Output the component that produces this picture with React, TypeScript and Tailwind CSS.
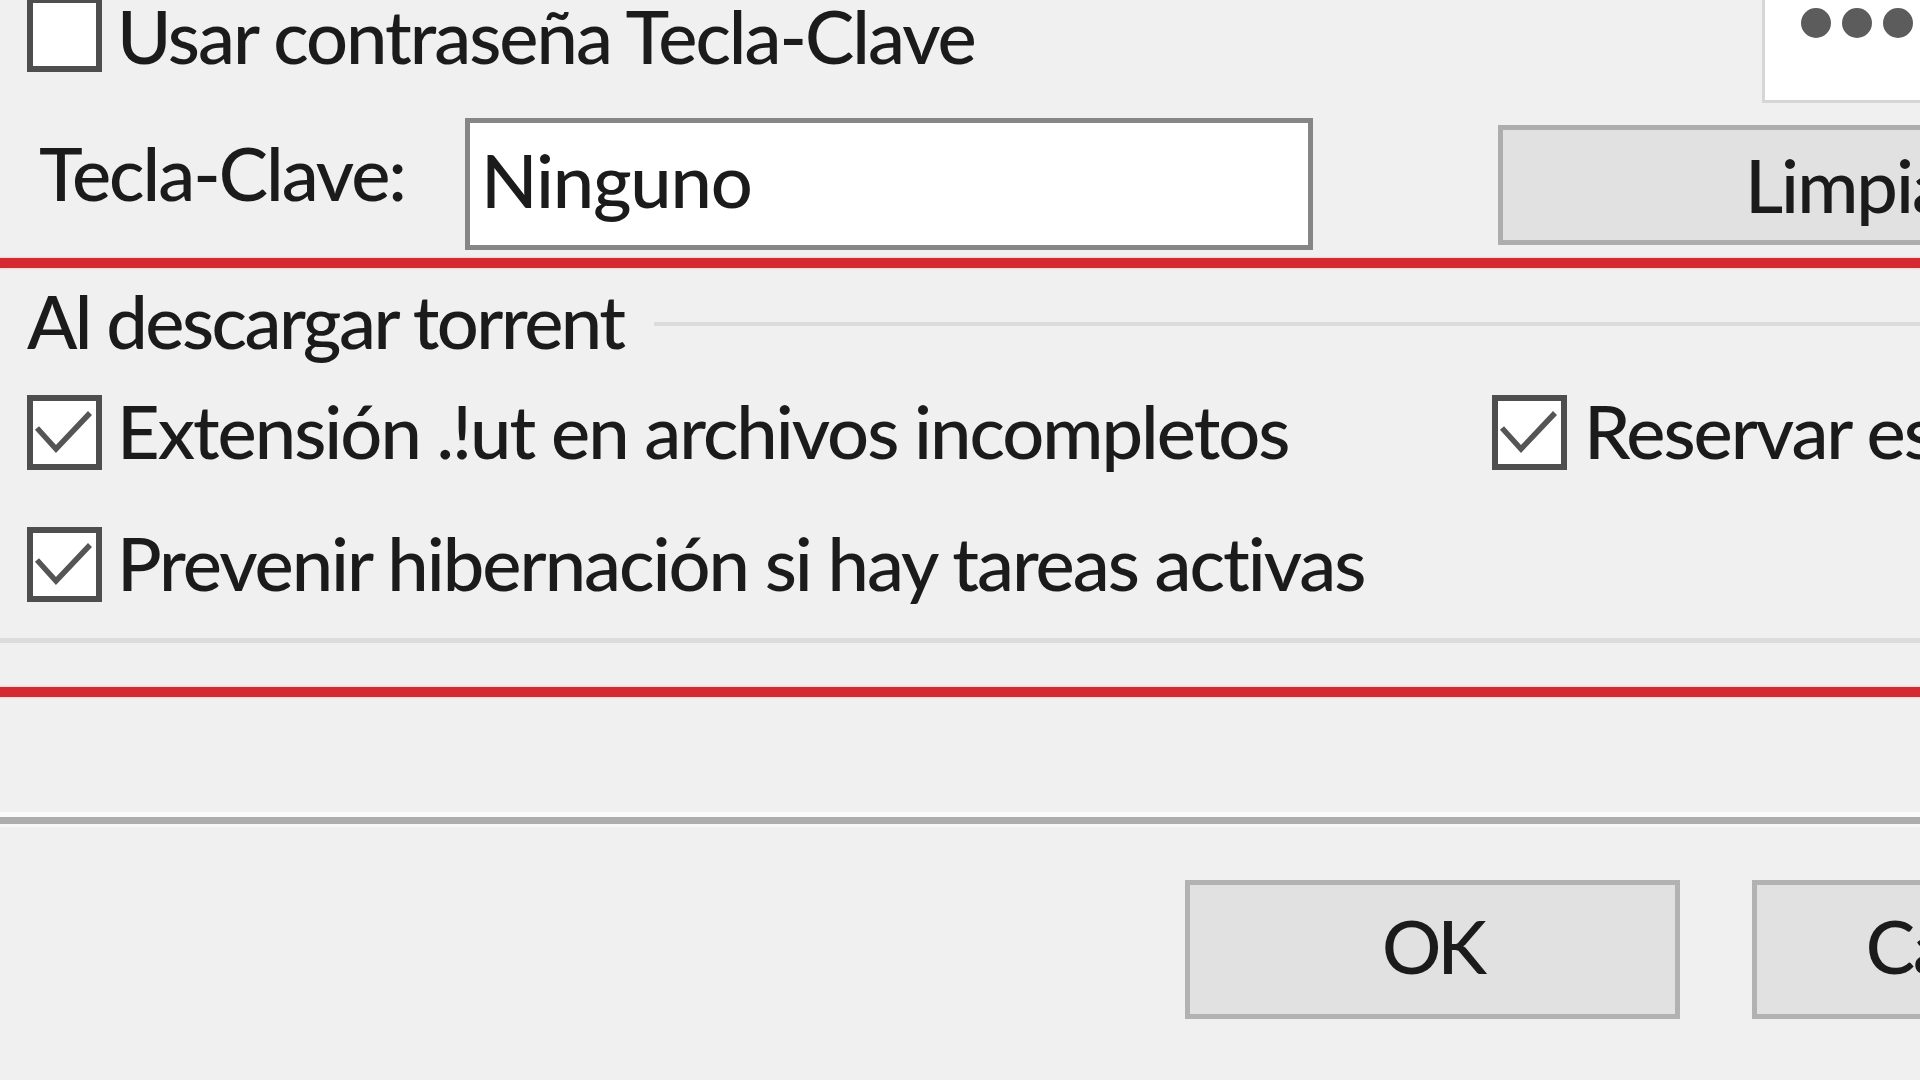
import React from "react";

function CheckBox({ checked = false }: { checked?: boolean }) {
  return (
    <div className="relative h-[75px] w-[75px] shrink-0 border-[6px] border-[#4e4e4e] bg-white">
      {checked && (
        <svg
          viewBox="0 0 75 75"
          className="absolute left-[-6px] top-[-6px] h-[75px] w-[75px]"
        >
          <polyline
            points="10,33 29,54 63,18"
            fill="none"
            stroke="#555555"
            strokeWidth="5.5"
          />
        </svg>
      )}
    </div>
  );
}

function Label({
  children,
  className = "",
  tight = "tracking-[-2px]",
}: {
  children: React.ReactNode;
  className?: string;
  tight?: string;
}) {
  return (
    <span className={`whitespace-nowrap leading-[75px] ${tight} ${className}`}>
      {children}
    </span>
  );
}

export default function App() {
  return (
    <div className="flex h-[1080px] w-[1920px] flex-col overflow-hidden bg-[#f0f0f0] font-['Lato','Open_Sans',sans-serif] text-[74px] font-medium text-[#1b1b1b]">
      {/* password row */}
      <div className="flex h-[104px] items-start">
        <div className="ml-[27px] -mt-[3px]">
          <CheckBox />
        </div>
        <Label className="ml-[15px] -mt-[2px]">Usar contraseña Tecla-Clave</Label>
        <div className="ml-auto -mt-[4px] flex h-[107px] w-[158px] shrink-0 gap-[11px] border-[3px] border-r-0 border-[#d6d6d6] bg-white pl-[36px] pt-[9px]">
          <span className="h-[30px] w-[30px] shrink-0 rounded-full bg-[#5c5c5c]" />
          <span className="h-[30px] w-[30px] shrink-0 rounded-full bg-[#5c5c5c]" />
          <span className="h-[30px] w-[30px] shrink-0 rounded-full bg-[#5c5c5c]" />
        </div>
      </div>

      {/* hotkey row */}
      <div className="mt-[14px] flex h-[132px] items-start">
        <Label className="ml-[39px] mt-[17px]">Tecla-Clave:</Label>
        <div className="ml-auto flex h-[132px] w-[848px] shrink-0 items-start border-[5px] border-[#868686] bg-white pl-[11px] pt-[19px]">
          <Label tight="tracking-[-1.2px]">Ninguno</Label>
        </div>
        <div className="ml-[185px] mt-[7px] flex h-[120px] w-[422px] shrink-0 items-start border-[5px] border-r-0 border-[#adadad] bg-[#e1e1e1] pl-[242px] pt-[17px]">
          <Label>Limpiar</Label>
        </div>
      </div>

      <div className="mt-[8px] h-[10px] bg-[#d42a32] shadow-[0_0_3px_#f6b4b4]" />

      {/* group: Al descargar torrent */}
      <div className="mt-[13px] flex h-[75px] items-start">
        <Label className="ml-[27px] mt-[2px]" tight="tracking-[-2.5px]">
          Al descargar torrent
        </Label>
        <div className="ml-[30px] mt-[41px] h-[4px] flex-1 bg-[#dcdcdc]" />
      </div>

      <div className="mt-[39px] flex h-[75px] items-start">
        <div className="flex w-[1492px] shrink-0 items-start pl-[27px]">
          <CheckBox checked />
          <Label className="ml-[15px] -mt-[2px]">Extensión .!ut en archivos incompletos</Label>
        </div>
        <CheckBox checked />
        <Label className="ml-[17px] -mt-[2px]">Reservar espacio para todos los archivos</Label>
      </div>

      <div className="mt-[57px] flex h-[76px] items-start pl-[27px]">
        <CheckBox checked />
        <Label className="ml-[15px] -mt-[2px]">Prevenir hibernación si hay tareas activas</Label>
      </div>

      <div className="mt-[35px] h-[5px] bg-[#dcdcdc]" />

      <div className="mt-[44px] h-[10px] bg-[#d42a32] shadow-[0_0_3px_#f6b4b4]" />

      {/* dialog footer */}
      <div className="mt-[115px] h-[5px] bg-[#fafafa]" />
      <div className="h-[7px] bg-[#acacac]" />
      <div className="h-[3px] bg-[#f6f6f6]" />

      <div className="mt-[53px] flex items-start">
        <div className="ml-[1185px] flex h-[139px] w-[495px] shrink-0 items-center justify-center border-[5px] border-[#b2b2b2] bg-[#e1e1e1] pb-[9px]">
          <Label tight="tracking-[-4px]">OK</Label>
        </div>
        <div className="ml-[72px] flex h-[139px] w-[495px] shrink-0 items-center justify-center border-[5px] border-[#b2b2b2] bg-[#e1e1e1] pb-[9px]">
          <Label>Cancelar</Label>
        </div>
      </div>
    </div>
  );
}
